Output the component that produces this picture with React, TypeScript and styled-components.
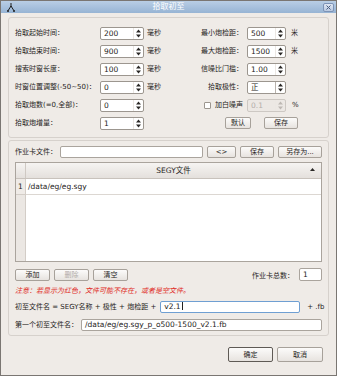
import React from 'react';
import styled, {createGlobalStyle} from 'styled-components';

const GlobalStyle = createGlobalStyle`
    html, body {
        margin: 0;
        padding: 0;
        background: #ffffff;
    }
    body {
        font-family: "DejaVu Sans", "Noto Sans CJK SC", sans-serif;
        font-size: 7px;
        color: #262422;
    }
`;

const DialogWindow = styled.div`
    width: 337px;
    height: 376px;
    box-sizing: border-box;
    border: 1px solid #7a7672;
    background: #efebe7;
    display: flex;
    flex-direction: column;
`;

const TitleBar = styled.div`
    height: 12px;
    flex-shrink: 0;
    display: grid;
    grid-template-columns: 24px 1fr 24px;
    align-items: center;
    background: linear-gradient(#b9cee5, #97b4d4);
`;

const TitleIcon = styled.span`
    display: flex;
    padding-left: 6px;
`;

const TitleText = styled.span`
    text-align: center;
    color: #ffffff;
    font-size: 8px;
    line-height: 12px;
`;

const CloseButton = styled.span`
    justify-self: end;
    margin-right: 2px;
    width: 11px;
    height: 9px;
    box-sizing: border-box;
    border: 1px solid #7d93b6;
    border-radius: 2px;
    background: linear-gradient(#dfe7f3, #b9c9e1);
    display: flex;
    align-items: center;
    justify-content: center;
`;

const DialogBody = styled.div`
    flex: 1;
    padding: 4px 7px 0 7px;
    display: flex;
    flex-direction: column;
`;

const GroupBox = styled.div<{ $h: number; $top: number }>`
    height: ${p => p.$h}px;
    margin-top: ${p => p.$top}px;
    box-sizing: border-box;
    border: 1px solid #d6d1cc;
    border-radius: 3px;
`;

const ParamGroup = styled(GroupBox)`
    padding: 6px 6px 0 6px;
    display: flex;
`;

const FileGroup = styled(GroupBox)`
    padding: 5px 6px 0 6px;
    display: flex;
    flex-direction: column;
`;

const LeftCol = styled.div`
    width: 155px;
    display: flex;
    flex-direction: column;
`;

const RightCol = styled.div`
    flex: 1;
    display: flex;
    flex-direction: column;
`;

const LeftRow = styled.div`
    height: 18px;
    display: grid;
    grid-template-columns: 85px 44px auto;
    align-items: center;
`;

const RightRow = styled.div`
    height: 18px;
    display: grid;
    grid-template-columns: 77px 39px auto;
    align-items: center;
`;

const FieldLabel = styled.span<{ $right?: boolean }>`
    white-space: nowrap;
    line-height: 10px;
    justify-self: ${p => p.$right ? 'end' : 'start'};
    padding-right: ${p => p.$right ? 4 : 0}px;
    display: flex;
    align-items: center;
`;

const Unit = styled.span<{ $gap: number }>`
    padding-left: ${p => p.$gap}px;
    line-height: 10px;
`;

const SpinFrame = styled.div<{ $disabled?: boolean }>`
    height: 13px;
    box-sizing: border-box;
    border: 1px solid ${p => p.$disabled ? '#cdc8c3' : '#9c968f'};
    border-radius: 2px;
    background: ${p => p.$disabled ? '#ece8e4' : '#ffffff'};
    color: ${p => p.$disabled ? '#b3aea9' : '#262422'};
    font-size: 7.5px;
    display: flex;
`;

const SpinValue = styled.span`
    flex: 1;
    padding-left: 3px;
    line-height: 11px;
`;

const SpinArrows = styled.span<{ $divider?: boolean }>`
    width: 9px;
    display: flex;
    align-items: center;
    justify-content: center;
    border-left: 1px solid ${p => p.$divider ? '#b8b2ac' : '#ebe7e3'};
`;

const CheckBox = styled.span`
    width: 7px;
    height: 7px;
    box-sizing: border-box;
    border: 1px solid #9c968f;
    border-radius: 1px;
    background: #ffffff;
    margin-right: 4px;
`;

const PushButton = styled.button<{ $w: number; $h: number; $primary?: boolean }>`
    width: ${p => p.$w}px;
    height: ${p => p.$h}px;
    flex-shrink: 0;
    padding: 0;
    box-sizing: border-box;
    border: 1px solid ${p => p.$primary ? '#5f5a55' : '#a7a19a'};
    border-radius: 2px;
    background: linear-gradient(#fcfbfa, #e7e3df);
    font: inherit;
    line-height: 10px;
    color: ${p => p.disabled ? '#b1aca7' : '#262422'};
`;

const ButtonPair = styled.div`
    grid-column: 1 / -1;
    display: flex;
    gap: 13px;
    padding-left: 55px;
`;

const TextInput = styled.div<{ $w?: number; $h: number; $focus?: boolean }>`
    width: ${p => p.$w ? `${p.$w}px` : 'auto'};
    flex: ${p => p.$w ? 'none' : 1};
    height: ${p => p.$h}px;
    box-sizing: border-box;
    border: 1px solid ${p => p.$focus ? '#6f9fd2' : '#aaa49d'};
    border-radius: 2px;
    background: #ffffff;
    padding-left: 3px;
    font-size: 7.5px;
    line-height: ${p => p.$h - 2}px;
    white-space: nowrap;
    overflow: hidden;
`;

const Caret = styled.span`
    display: inline-block;
    width: 1px;
    height: 8px;
    background: #222;
    vertical-align: -1px;
    margin-left: 1px;
`;

const CardFileRow = styled.div`
    height: 12px;
    display: grid;
    grid-template-columns: 41px 143px 29px 34px 44px;
    column-gap: 4px;
    align-items: center;
`;

const FileTable = styled.div`
    margin-top: 4px;
    height: 100px;
    box-sizing: border-box;
    border: 1px solid #aaa49d;
    background: #ffffff;
    display: flex;
    flex-direction: column;
    font-size: 7.5px;
`;

const TableHead = styled.div`
    height: 15px;
    flex-shrink: 0;
    display: flex;
    background: linear-gradient(#f6f4f2, #e4e0dc);
    border-bottom: 1px solid #c8c2bc;
`;

const CornerCell = styled.span`
    width: 9px;
    border-right: 1px solid #cfc9c3;
`;

const HeadTitle = styled.span`
    flex: 1;
    display: flex;
    align-items: center;
    justify-content: center;
    position: relative;
    line-height: 14px;
`;

const SortMark = styled.span`
    position: absolute;
    right: 6px;
    top: 5px;
    display: flex;
`;

const TableBody = styled.div`
    flex: 1;
    display: flex;
`;

const RowHeaderCol = styled.div`
    width: 9px;
    background: #ebe7e3;
    border-right: 1px solid #d3cdc7;
`;

const RowNumber = styled.div`
    height: 16px;
    box-sizing: border-box;
    line-height: 15px;
    text-align: center;
    border-bottom: 1px solid #d3cdc7;
    background: #efebe7;
`;

const CellCol = styled.div`
    flex: 1;
`;

const DataCell = styled.div`
    height: 16px;
    box-sizing: border-box;
    line-height: 15px;
    padding-left: 2px;
    border-bottom: 1px solid #dcd7d2;
`;

const ToolRow = styled.div`
    margin-top: 6px;
    height: 13px;
    display: flex;
    align-items: center;
    gap: 4px;
`;

const CountBox = styled.div`
    margin-left: auto;
    display: flex;
    align-items: center;
    gap: 5px;
`;

const NoteRow = styled.div`
    height: 17px;
    display: flex;
    align-items: center;
    color: #e02a24;
    font-style: italic;
`;

const FormRow = styled.div`
    height: 18px;
    display: flex;
    align-items: center;
`;

const RowLabel = styled.span<{ $w?: number }>`
    width: ${p => p.$w ? `${p.$w}px` : 'auto'};
    margin-right: ${p => p.$w ? 0 : 4}px;
    flex-shrink: 0;
    white-space: nowrap;
    line-height: 10px;
`;

const Suffix = styled.span`
    margin-left: 7px;
    white-space: nowrap;
    line-height: 10px;
`;

const Footer = styled.div`
    padding-top: 11px;
    padding-right: 6px;
    display: flex;
    justify-content: flex-end;
    gap: 4px;
`;

const SpinArrowIcon = ({disabled}: { disabled?: boolean }) => (
    <svg width="5" height="9" viewBox="0 0 5 9">
        <path d="M0 3.6 L2.5 0.6 L5 3.6 Z M0 5.4 L2.5 8.4 L5 5.4 Z" fill={disabled ? '#bdb8b3' : '#2a2826'}/>
    </svg>
);

const SpinBox = ({value, disabled}: { value: string; disabled?: boolean }) => (
    <SpinFrame $disabled={disabled}>
        <SpinValue>{value}</SpinValue>
        <SpinArrows><SpinArrowIcon disabled={disabled}/></SpinArrows>
    </SpinFrame>
);

const leftParams = [
    {label: '拾取起始时间：', value: '200', unit: '毫秒'},
    {label: '拾取结束时间：', value: '900', unit: '毫秒'},
    {label: '搜索时窗长度：', value: '100', unit: '毫秒'},
    {label: '时窗位置调整(-50~50)：', value: '0', unit: '毫秒'},
    {label: '拾取炮数(=0,全部)：', value: '0', unit: ''},
    {label: '拾取炮增量：', value: '1', unit: ''},
];

const rightParams = [
    {label: '最小炮检距：', value: '500', unit: '米'},
    {label: '最大炮检距：', value: '1500', unit: '米'},
    {label: '信噪比门槛：', value: '1.00', unit: ''},
];

const App = () => {
    return (
        <>
            <GlobalStyle/>
            <DialogWindow>
                <TitleBar>
                    <TitleIcon>
                        <svg width="8" height="9" viewBox="0 0 8 9">
                            <path d="M4 0 V4 M4 3 L1.2 7.5 M4 3 L6.8 7.5" stroke="#1b1b1b" strokeWidth="1" fill="none"/>
                            <circle cx="1" cy="8" r="1" fill="#1b1b1b"/>
                            <circle cx="7" cy="8" r="1" fill="#1b1b1b"/>
                        </svg>
                    </TitleIcon>
                    <TitleText>拾取初至</TitleText>
                    <CloseButton>
                        <svg width="5" height="5" viewBox="0 0 5 5">
                            <path d="M0.5 0.5 L4.5 4.5 M4.5 0.5 L0.5 4.5" stroke="#4b5f82" strokeWidth="1"/>
                        </svg>
                    </CloseButton>
                </TitleBar>
                <DialogBody>
                    <ParamGroup $h={121} $top={0}>
                        <LeftCol>
                            {leftParams.map(p =>
                                <LeftRow key={p.label}>
                                    <FieldLabel>{p.label}</FieldLabel>
                                    <SpinBox value={p.value}/>
                                    <Unit $gap={3}>{p.unit}</Unit>
                                </LeftRow>
                            )}
                        </LeftCol>
                        <RightCol>
                            {rightParams.map(p =>
                                <RightRow key={p.label}>
                                    <FieldLabel $right>{p.label}</FieldLabel>
                                    <SpinBox value={p.value}/>
                                    <Unit $gap={5}>{p.unit}</Unit>
                                </RightRow>
                            )}
                            <RightRow>
                                <FieldLabel $right>拾取极性：</FieldLabel>
                                <SpinFrame>
                                    <SpinValue>正</SpinValue>
                                    <SpinArrows $divider><SpinArrowIcon/></SpinArrows>
                                </SpinFrame>
                            </RightRow>
                            <RightRow>
                                <FieldLabel $right><CheckBox/>加白噪声</FieldLabel>
                                <SpinBox value="0.1" disabled/>
                                <Unit $gap={6}>%</Unit>
                            </RightRow>
                            <RightRow>
                                <ButtonPair>
                                    <PushButton $w={26} $h={12}>默认</PushButton>
                                    <PushButton $w={34} $h={12}>保存</PushButton>
                                </ButtonPair>
                            </RightRow>
                        </RightCol>
                    </ParamGroup>
                    <FileGroup $h={196} $top={2}>
                        <CardFileRow>
                            <FieldLabel>作业卡文件：</FieldLabel>
                            <TextInput $h={12}/>
                            <PushButton $w={29} $h={12}>&lt;&gt;</PushButton>
                            <PushButton $w={34} $h={12}>保存</PushButton>
                            <PushButton $w={44} $h={12}>另存为...</PushButton>
                        </CardFileRow>
                        <FileTable>
                            <TableHead>
                                <CornerCell/>
                                <HeadTitle>
                                    SEGY文件
                                    <SortMark>
                                        <svg width="5" height="3" viewBox="0 0 5 3">
                                            <path d="M0 3 L2.5 0 L5 3 Z" fill="#2a2826"/>
                                        </svg>
                                    </SortMark>
                                </HeadTitle>
                            </TableHead>
                            <TableBody>
                                <RowHeaderCol>
                                    <RowNumber>1</RowNumber>
                                </RowHeaderCol>
                                <CellCol>
                                    <DataCell>/data/eg/eg.sgy</DataCell>
                                </CellCol>
                            </TableBody>
                        </FileTable>
                        <ToolRow>
                            <PushButton $w={35} $h={12}>添加</PushButton>
                            <PushButton $w={35} $h={12} disabled>删除</PushButton>
                            <PushButton $w={35} $h={12}>清空</PushButton>
                            <CountBox>
                                <span>作业卡总数：</span>
                                <TextInput $w={23} $h={13}>1</TextInput>
                            </CountBox>
                        </ToolRow>
                        <NoteRow>注意：若显示为红色，文件可能不存在，或者是空文件。</NoteRow>
                        <FormRow>
                            <RowLabel>初至文件名 = SEGY名称 + 极性 + 炮检距 +</RowLabel>
                            <TextInput $w={140} $h={12} $focus>v2.1<Caret/></TextInput>
                            <Suffix>+ .fb</Suffix>
                        </FormRow>
                        <FormRow>
                            <RowLabel $w={66}>第一个初至文件名：</RowLabel>
                            <TextInput $h={12}>/data/eg/eg.sgy_p_o500-1500_v2.1.fb</TextInput>
                        </FormRow>
                    </FileGroup>
                    <Footer>
                        <PushButton $w={45} $h={15} $primary>确定</PushButton>
                        <PushButton $w={46} $h={15}>取消</PushButton>
                    </Footer>
                </DialogBody>
            </DialogWindow>
        </>
    );
};

export default App;
